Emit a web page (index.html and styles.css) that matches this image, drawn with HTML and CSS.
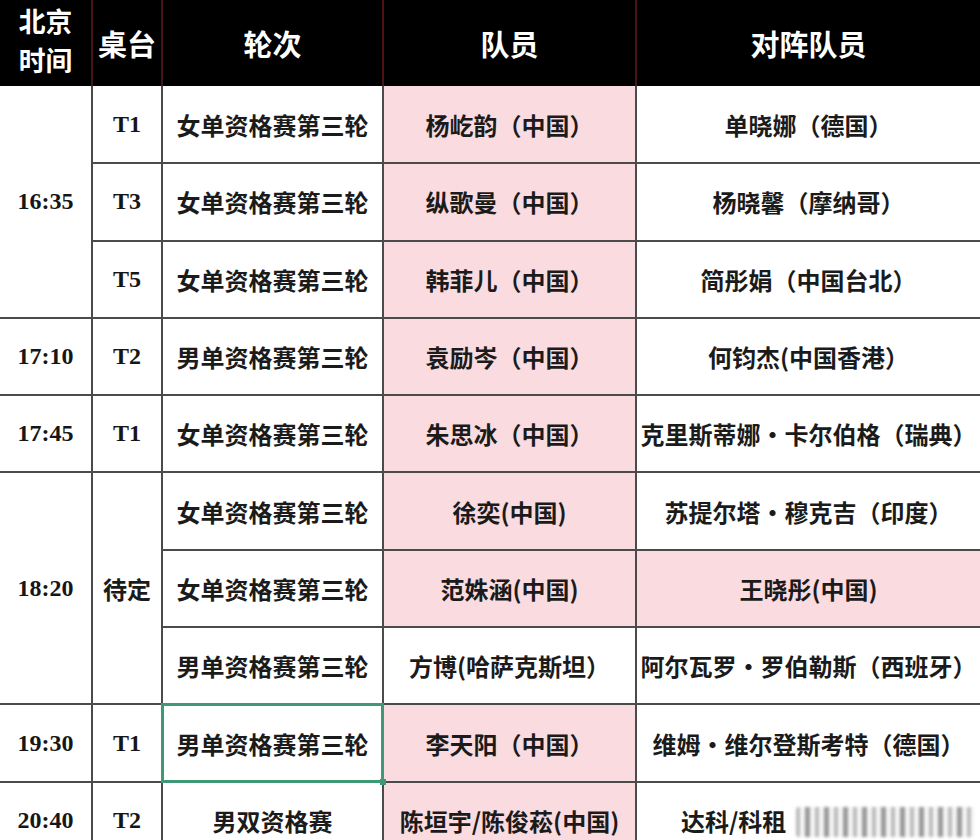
FILE: index.html
```html
<!DOCTYPE html>
<html lang="zh-CN">
<head>
<meta charset="utf-8">
<title>赛程</title>
<link rel="stylesheet" href="styles.css">
</head>
<body>
<table class="sched">
  <colgroup>
    <col class="c-time"><col class="c-table"><col class="c-round"><col class="c-player"><col class="c-opp">
  </colgroup>
  <thead>
    <tr>
      <th class="h-time"><span class="h-line">北京</span><span class="h-line">时间</span></th>
      <th>桌台</th>
      <th>轮次</th>
      <th>队员</th>
      <th>对阵队员</th>
    </tr>
  </thead>
  <tbody>
    <tr>
      <td class="num" rowspan="3">16:35</td>
      <td class="num">T1</td>
      <td>女单资格赛第三轮</td>
      <td class="pink">杨屹韵（中国）</td>
      <td>单晓娜（德国）</td>
    </tr>
    <tr>
      <td class="num">T3</td>
      <td>女单资格赛第三轮</td>
      <td class="pink">纵歌曼（中国）</td>
      <td>杨晓馨（摩纳哥）</td>
    </tr>
    <tr>
      <td class="num">T5</td>
      <td>女单资格赛第三轮</td>
      <td class="pink">韩菲儿（中国）</td>
      <td>简彤娟（中国台北）</td>
    </tr>
    <tr>
      <td class="num">17:10</td>
      <td class="num">T2</td>
      <td>男单资格赛第三轮</td>
      <td class="pink">袁励岑（中国）</td>
      <td>何钧杰(中国香港）</td>
    </tr>
    <tr>
      <td class="num">17:45</td>
      <td class="num">T1</td>
      <td>女单资格赛第三轮</td>
      <td class="pink">朱思冰（中国）</td>
      <td>克里斯蒂娜·卡尔伯格（瑞典）</td>
    </tr>
    <tr>
      <td class="num" rowspan="3">18:20</td>
      <td rowspan="3">待定</td>
      <td>女单资格赛第三轮</td>
      <td class="pink">徐奕(中国)</td>
      <td>苏提尔塔·穆克吉（印度）</td>
    </tr>
    <tr>
      <td>女单资格赛第三轮</td>
      <td class="pink">范姝涵(中国)</td>
      <td class="pink">王晓彤(中国)</td>
    </tr>
    <tr>
      <td>男单资格赛第三轮</td>
      <td>方博(哈萨克斯坦）</td>
      <td>阿尔瓦罗·罗伯勒斯（西班牙）</td>
    </tr>
    <tr>
      <td class="num">19:30</td>
      <td class="num">T1</td>
      <td class="selected">男单资格赛第三轮</td>
      <td class="pink">李天阳（中国）</td>
      <td>维姆·维尔登斯考特（德国）</td>
    </tr>
    <tr>
      <td class="num">20:40</td>
      <td class="num">T2</td>
      <td>男双资格赛</td>
      <td class="pink">陈垣宇/陈俊菘(中国)</td>
      <td class="last-opp">达科/科租<span class="watermark" aria-hidden="true"></span></td>
    </tr>
  </tbody>
</table>
</body>
</html>
```

FILE: styles.css
```css
html, body {
  margin: 0;
  padding: 0;
  background: #ffffff;
}

body {
  width: 980px;
  height: 840px;
  overflow: hidden;
  font-family: "Noto Sans CJK SC", "Noto Sans", sans-serif;
}

.sched {
  width: 980px;
  table-layout: fixed;
  border-collapse: collapse;
  border-spacing: 0;
}

.c-time { width: 92px; }
.c-table { width: 70px; }
.c-round { width: 221px; }
.c-player { width: 253px; }
.c-opp { width: 344px; }

.sched th {
  height: 85px;
  padding: 0;
  background: #000000;
  color: #ffffff;
  font-size: 29px;
  font-weight: 700;
  line-height: 36px;
  text-align: center;
  vertical-align: middle;
  border-left: 2px solid #4a1414;
  border-right: 2px solid #4a1414;
  border-top: 0;
  border-bottom: 0;
}

.sched th:first-child { border-left: 0; }
.sched th:last-child { border-right: 0; }

.sched th.h-time {
  font-size: 26.8px;
  line-height: 39px;
  vertical-align: top;
  padding-top: 1px;
}

.h-line {
  display: block;
  height: 39px;
  line-height: 39px;
}

.sched tbody tr {
  height: 77.3px;
}

.sched td {
  padding: 0;
  text-align: center;
  vertical-align: middle;
  color: #1b1b1b;
  font-size: 24px;
  font-weight: 700;
  white-space: nowrap;
  border: 2px solid #4b4b4b;
  background: #ffffff;
}

.sched tbody tr:nth-child(1) td:first-child,
.sched tbody tr:nth-child(4) td:first-child,
.sched tbody tr:nth-child(5) td:first-child,
.sched tbody tr:nth-child(6) td:first-child,
.sched tbody tr:nth-child(9) td:first-child,
.sched tbody tr:nth-child(10) td:first-child {
  border-left: 0;
}

.sched td:last-child { border-right: 0; }

.sched tbody tr:first-child td { border-top: 0; }

.sched td.num {
  font-family: "Liberation Serif", "Times New Roman", serif;
  font-size: 24px;
  font-weight: 700;
  color: #161616;
}

.sched td.pink {
  background: #fadbe0;
}

.sched td.selected {
  position: relative;
  outline: 3px solid #3f9876;
  outline-offset: -2px;
}

.sched td.selected::after {
  content: "";
  position: absolute;
  right: -4px;
  bottom: -4px;
  width: 6px;
  height: 6px;
  background: #3f9876;
}

.sched td.last-opp {
  text-align: left;
  padding-left: 44px;
}

.watermark {
  display: inline-block;
  vertical-align: middle;
  width: 178px;
  height: 30px;
  margin-left: 10px;
  margin-top: -4px;
  background:
    repeating-linear-gradient(90deg,
      rgba(90,90,90,0.55) 0 4px,
      rgba(235,235,235,0.6) 4px 9px,
      rgba(60,60,60,0.7) 9px 14px,
      rgba(230,230,230,0.5) 14px 19px);
  filter: blur(1.6px);
  opacity: 0.75;
  border-radius: 3px;
}
```
